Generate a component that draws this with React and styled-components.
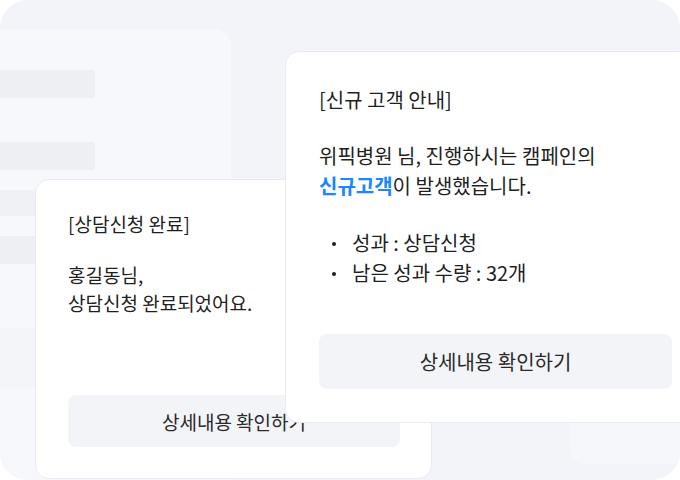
import React from "react";
import styled, { createGlobalStyle } from "styled-components";

const GlobalStyle = createGlobalStyle`
  html, body { margin: 0; padding: 0; background: #ffffff; }
  body { font-family: "Noto Sans CJK KR", "Noto Sans", sans-serif; color: #1f1f1f; }
  * { box-sizing: border-box; }
`;

const Stage = styled.div`
  position: relative;
  width: 680px;
  height: 480px;
  border-radius: 28px;
  background: #f3f4f9;
  overflow: hidden;
`;

const BackPanel = styled.div`
  position: absolute;
  left: -20px;
  top: 30px;
  width: 251px;
  height: 470px;
  border-radius: 16px;
  background: #f7f8fc;
  display: flex;
  flex-direction: column;
  padding-top: 40px;
  filter: blur(0.6px);
`;

const GhostBar = styled.div`
  width: 115px;
  height: ${(p) => p.$h}px;
  margin-top: ${(p) => p.$gap}px;
  background: ${(p) => p.$tone};
  border-radius: 2px;
`;

const GhostCard = styled.div`
  position: absolute;
  left: 570px;
  top: 380px;
  width: 140px;
  height: 84px;
  border-radius: 16px;
  background: #f6f7fb;
  filter: blur(0.6px);
`;

const Card = styled.div`
  position: absolute;
  left: ${(p) => p.$x}px;
  top: ${(p) => p.$y}px;
  width: ${(p) => p.$w}px;
  height: ${(p) => p.$h}px;
  padding: ${(p) => p.$pad};
  background: #ffffff;
  border: 1px solid #e8eaf5;
  border-radius: 14px;
  display: flex;
  flex-direction: column;
  font-size: ${(p) => p.$fs}px;
  line-height: ${(p) => p.$lh}px;
  color: #1f1f1f;
`;

const Title = styled.div`
  white-space: nowrap;
`;

const Body = styled.div`
  margin-top: ${(p) => p.$gap}px;
  white-space: nowrap;
`;

const Accent = styled.span`
  color: #1a86ff;
  font-weight: 600;
`;

const List = styled.ul`
  list-style: none;
  margin: ${(p) => p.$gap}px 0 0;
  padding: 0 0 0 13px;
`;

const Item = styled.li`
  position: relative;
  padding-left: 20px;
  white-space: nowrap;
  &::before {
    content: "";
    position: absolute;
    left: 0;
    top: 50%;
    width: 4px;
    height: 4px;
    margin-top: -1px;
    border-radius: 50%;
    background: #1f1f1f;
  }
`;

const ActionButton = styled.button`
  margin-top: auto;
  height: ${(p) => p.$h}px;
  border: none;
  border-radius: 8px;
  background: #f3f4f8;
  font-family: inherit;
  font-size: inherit;
  color: #2a2a2a;
  cursor: pointer;
  white-space: nowrap;
`;

const ghostBars = [
  { h: 28, gap: 0, tone: "#eeeff3" },
  { h: 28, gap: 44, tone: "#eeeff3" },
  { h: 26, gap: 20, tone: "#f0f1f5" },
  { h: 28, gap: 20, tone: "#eeeff3" },
  { h: 60, gap: 64, tone: "#f4f5f9" },
];

export default function App() {
  return (
    <>
      <GlobalStyle />
      <Stage>
        <BackPanel>
          {ghostBars.map((b, i) => (
            <GhostBar key={i} $h={b.h} $gap={b.gap} $tone={b.tone} />
          ))}
        </BackPanel>
        <GhostCard />

        <Card $x={35} $y={179} $w={397} $h={300} $pad="30px 31px 31px 32px" $fs={19} $lh={28}>
          <Title>[상담신청 완료]</Title>
          <Body $gap={23}>
            홍길동님,
            <br />
            상담신청 완료되었어요.
          </Body>
          <ActionButton $h={52}>상세내용 확인하기</ActionButton>
        </Card>

        <Card $x={285} $y={51} $w={421} $h={372} $pad="33px 33px 33px 33px" $fs={20} $lh={30}>
          <Title>[신규 고객 안내]</Title>
          <Body $gap={26}>
            위픽병원 님, 진행하시는 캠페인의
            <br />
            <Accent>신규고객</Accent>이 발생했습니다.
          </Body>
          <List $gap={27}>
            <Item>성과 : 상담신청</Item>
            <Item>남은 성과 수량 : 32개</Item>
          </List>
          <ActionButton $h={55}>상세내용 확인하기</ActionButton>
        </Card>
      </Stage>
    </>
  );
}
